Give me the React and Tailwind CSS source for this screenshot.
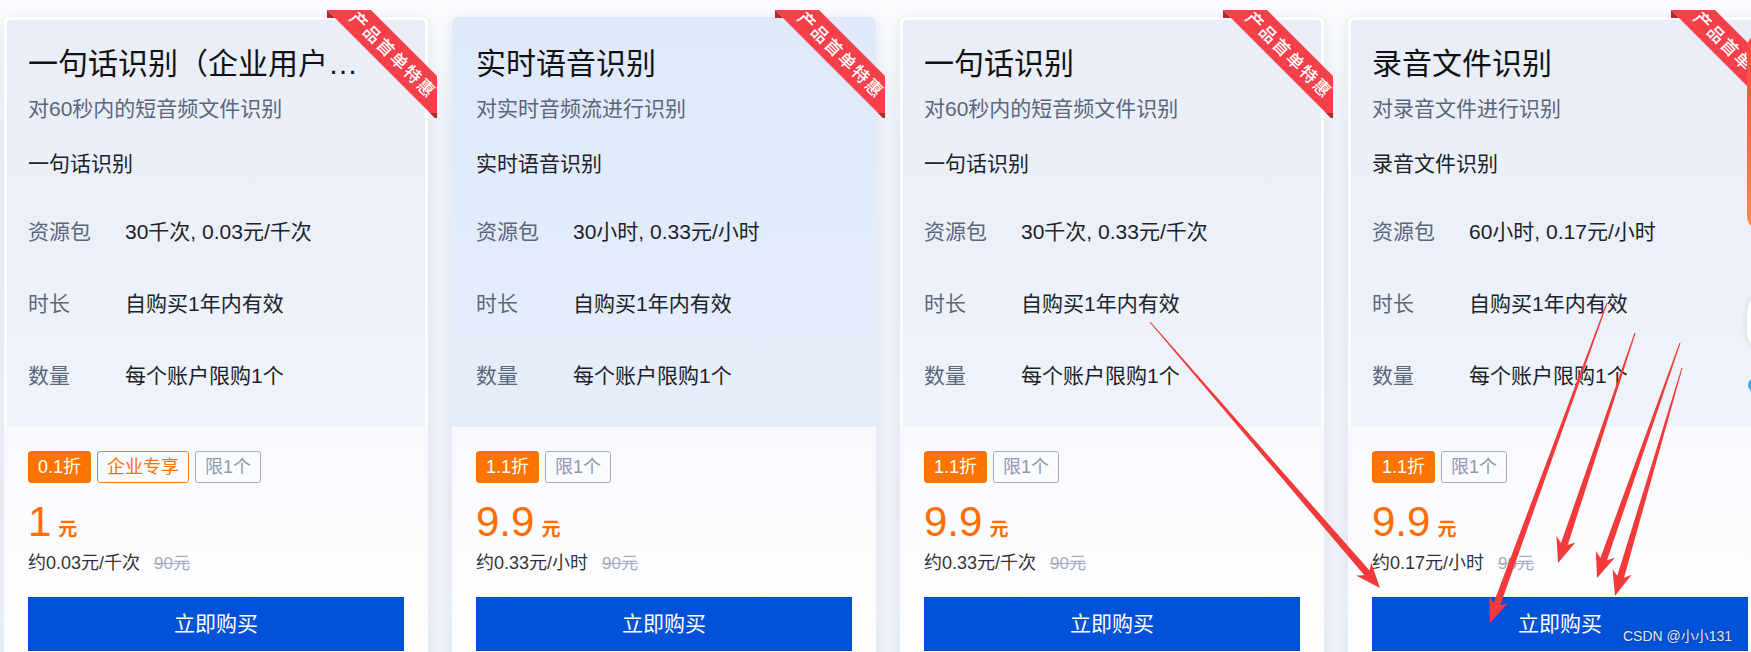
import React from "react";

const cards = [
  {
    title: "一句话识别（企业用户专享）",
    desc: "对60秒内的短音频文件识别",
    name: "一句话识别",
    pack: "30千次, 0.03元/千次",
    discount: "0.1折",
    enterprise: true,
    price: "1",
    unit: "约0.03元/千次",
  },
  {
    title: "实时语音识别",
    desc: "对实时音频流进行识别",
    name: "实时语音识别",
    pack: "30小时, 0.33元/小时",
    discount: "1.1折",
    price: "9.9",
    unit: "约0.33元/小时",
    active: true,
  },
  {
    title: "一句话识别",
    desc: "对60秒内的短音频文件识别",
    name: "一句话识别",
    pack: "30千次, 0.33元/千次",
    discount: "1.1折",
    price: "9.9",
    unit: "约0.33元/千次",
  },
  {
    title: "录音文件识别",
    desc: "对录音文件进行识别",
    name: "录音文件识别",
    pack: "60小时, 0.17元/小时",
    discount: "1.1折",
    price: "9.9",
    unit: "约0.17元/小时",
  },
];

// red annotation arrows drawn over the screenshot (tail -> tip)
const arrows = [
  [1150, 322, 1380, 588],
  [1607, 303, 1490, 623],
  [1635, 333, 1558, 563],
  [1680, 343, 1597, 578],
  [1682, 368, 1615, 596],
];

const arrowPoints = (x1, y1, x2, y2) => {
  const dx = x2 - x1;
  const dy = y2 - y1;
  const len = Math.hypot(dx, dy);
  const ux = dx / len;
  const uy = dy / len;
  const nx = -uy;
  const ny = ux;
  const headLen = 25;
  const headW = 10;
  const shaftW = 3.5;
  const tailW = 0.5;
  const bx = x2 - ux * headLen;
  const by = y2 - uy * headLen;
  const cx = x2 - ux * (headLen - 5);
  const cy = y2 - uy * (headLen - 5);
  return [
    [x1 + nx * tailW, y1 + ny * tailW],
    [cx + nx * shaftW, cy + ny * shaftW],
    [bx + nx * headW, by + ny * headW],
    [x2, y2],
    [bx - nx * headW, by - ny * headW],
    [cx - nx * shaftW, cy - ny * shaftW],
    [x1 - nx * tailW, y1 - ny * tailW],
  ]
    .map((p) => p.map((v) => v.toFixed(1)).join(","))
    .join(" ");
};

const Ribbon = () => (
  <svg
    className="absolute top-[-7px] right-[-9px] overflow-visible"
    width="110"
    height="108"
    viewBox="0 0 110 108"
  >
    <polygon points="0,0 44,0 110,66 110,108 108,108" fill="#f5404a" />
    <polygon points="0,0 8,8 0,8" fill="#b3262e" />
    <polygon points="103,103 110,103 110,108 108,108" fill="#b3262e" />
    <text
      x="67"
      y="44"
      transform="rotate(45 67 44)"
      textAnchor="middle"
      dominantBaseline="central"
      fill="#ffffff"
      fontSize="17"
      fontWeight="500"
      letterSpacing="2"
      fontFamily="Noto Sans CJK SC, sans-serif"
    >
      产品首单特惠
    </text>
  </svg>
);

const Row = ({ label, value }) => (
  <div className="flex leading-[32px] text-[21px]">
    <span className="w-[97px] shrink-0 text-[#5c667b]">{label}</span>
    <span className="text-[#1d2129]">{value}</span>
  </div>
);

const Card = ({ card }) => (
  <div className="relative w-[424px] shrink-0 rounded-[6px] bg-white shadow-[0_2px_14px_rgba(200,210,230,0.45)]">
    <div
      className={
        card.active
          ? "rounded-t-[6px] bg-linear-to-b from-[#dfe9fa] to-[#e6eefb] px-[24px] pt-[24px] pb-[35px]"
          : "mx-[3px] mt-[3px] rounded-t-[4px] bg-linear-to-b from-[#e8edf7] to-[#eff3fa] px-[21px] pt-[21px] pb-[35px]"
      }
    >
      <div className="max-w-[340px] truncate text-[30px] leading-[45px] text-[#111]">
        {card.title}
      </div>
      <div className="mt-[7px] text-[21px] leading-[32px] text-[#5c667b]">
        {card.desc}
      </div>
      <div className="mt-[23px] text-[21px] leading-[32px] text-[#1d2129]">
        {card.name}
      </div>
      <div className="mt-[36px] flex flex-col gap-[40px]">
        <Row label="资源包" value={card.pack} />
        <Row label="时长" value="自购买1年内有效" />
        <Row label="数量" value="每个账户限购1个" />
      </div>
    </div>

    <div className="bg-linear-to-b from-[#f9fafe] to-white px-[24px] pt-[24px] pb-[20px]">
      <div className="flex gap-[6px] text-[18px] leading-[30px]">
        <span className="h-[32px] rounded-[3px] border border-[#ff7300] bg-[#ff7300] px-[9px] text-white">
          {card.discount}
        </span>
        {card.enterprise && (
          <span className="h-[32px] rounded-[3px] border border-[#ff7a1a] px-[9px] text-[#ff7300]">
            企业专享
          </span>
        )}
        <span className="h-[32px] rounded-[3px] border border-[#a3adc0] px-[9px] text-[#8f99ad]">
          限1个
        </span>
      </div>

      <div className="mt-[18px] flex items-baseline text-[#ff6c00]">
        <span className="text-[42px] leading-[42px]">{card.price}</span>
        <span className="ml-[7px] text-[19px] font-bold">元</span>
      </div>

      <div className="mt-[5px] flex items-baseline leading-[27px]">
        <span className="text-[18px] text-[#333]">{card.unit}</span>
        <span className="ml-[14px] text-[17px] text-[#a3abbd] line-through">
          90元
        </span>
      </div>

      <button
        type="button"
        className="mt-[20px] h-[54px] w-full bg-[#0052d9] text-[21px] text-white"
      >
        立即购买
      </button>
    </div>

    <Ribbon />
  </div>
);

const App = () => {
  return (
    <div className="relative h-[652px] w-[1751px] overflow-hidden bg-linear-to-b from-[#fbfcfe] to-[#eff2f8] to-[20%] font-['Liberation_Sans','Noto_Sans_CJK_SC',sans-serif]">
      <div className="flex gap-[24px] pl-[4px] pt-[17px]">
        {cards.map((card, i) => (
          <Card key={i} card={card} />
        ))}
      </div>

      {/* floating toolbar on the right edge, mostly off screen */}
      <div className="absolute left-[1747px] top-[33px] h-[198px] w-[30px] rounded-[15px] bg-linear-to-b from-[#f4453a] to-[#ff8a4c]" />
      <div className="absolute left-[1747px] top-[292px] h-[60px] w-[40px] rounded-full bg-white shadow-[0_0_6px_rgba(0,0,0,0.12)]" />
      <div className="absolute left-[1748px] top-[378px] h-[14px] w-[14px] rounded-full bg-[#3fa9f5]" />

      <svg
        className="pointer-events-none absolute left-0 top-0"
        width="1751"
        height="652"
      >
        {arrows.map((a, i) => (
          <polygon key={i} points={arrowPoints(...a)} fill="#f23a3a" />
        ))}
      </svg>

      <div className="absolute left-[1623px] top-[626px] text-[14px] text-[#e4e7f0] [text-shadow:0_0_2px_rgba(30,30,50,0.7)]">
        CSDN @小小131
      </div>
    </div>
  );
};

export default App;
